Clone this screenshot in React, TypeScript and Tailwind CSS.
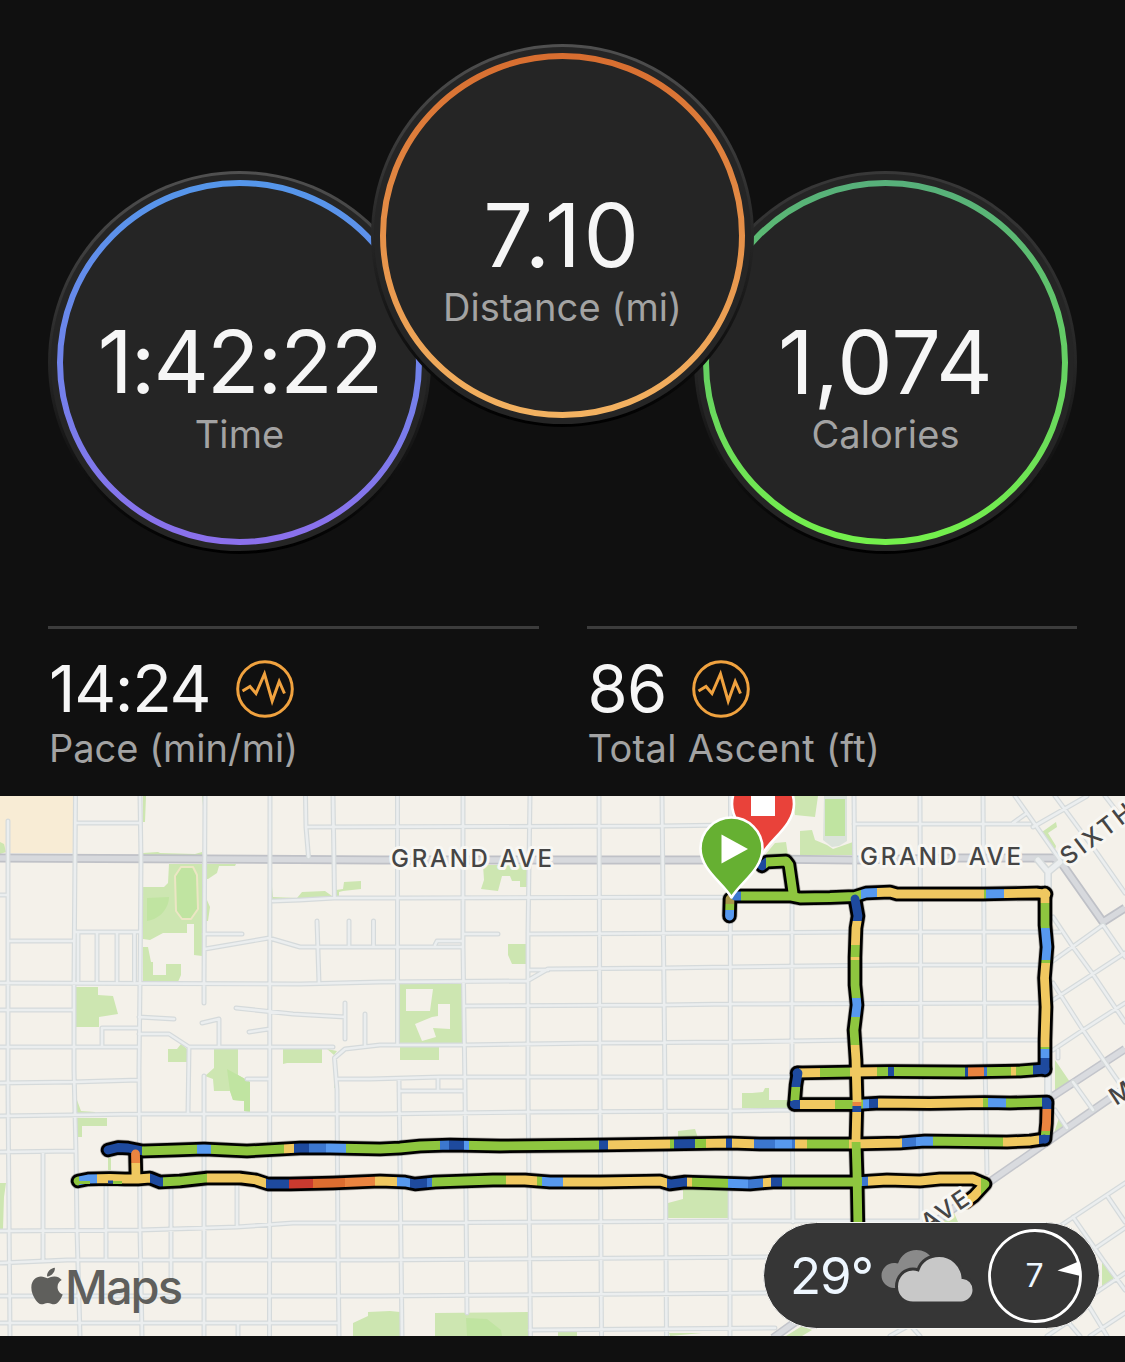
/**
 * Activity Summary
 *
 * Headline gauges (time, distance, calories), secondary stats
 * and the route map with current weather.
 */

import type { ReactNode } from 'react';
import { FaApple } from 'react-icons/fa';

export default function App() {
  return (
    <main className="w-[1125px] h-[1362px] overflow-hidden bg-[#101010] font-['Inter',sans-serif]">
      <section className="flex items-start px-12 pt-11 h-[626px]">
        <div className="shrink-0 mt-[127px]">
          <Gauge id="time" from="#5596ea" to="#8b70ec" edge="#505050" value="1:42:22" label="Time" valueClass="text-[86px] tracking-[-2px]" />
        </div>
        <div className="shrink-0 -mx-[60px] relative z-10">
          <Gauge id="distance" from="#d86e30" to="#f3b261" edge="#505050" value="7.10" label="Distance (mi)" valueClass="text-[88px] tracking-[2.6px]" />
        </div>
        <div className="shrink-0 mt-[127px]">
          <Gauge id="calories" from="#57b07a" to="#74f04c" edge="#383838" value="1,074" label="Calories" valueClass="text-[88px] tracking-[0.2px]" />
        </div>
      </section>

      <section className="grid grid-cols-2 gap-12 px-12 h-[170px]">
        <Stat value="14:24" label="Pace (min/mi)" valueClass="tracking-[-1.3px]" labelClass="tracking-[0px]" />
        <Stat value="86" label="Total Ascent (ft)" valueClass="tracking-[-0.8px]" labelClass="tracking-[0.35px]" />
      </section>

      <section className="relative h-[540px] overflow-hidden bg-[#f4f1ea]">
        <RouteMap />
        <div className="absolute left-[31px] top-[469px] flex items-start text-[#5f5f5c]">
          <FaApple className="w-[32px] h-[42px]" preserveAspectRatio="none" />
          <span className="ml-[2px] -mt-[2px] text-[47px] leading-[48px] font-medium tracking-[-2px]">Maps</span>
        </div>
        <Weather />
      </section>
    </main>
  );
}

interface GaugeProps {
  id: string;
  from: string;
  to: string;
  edge: string;
  value: string;
  label: string;
  valueClass: string;
}

function Gauge({ id, from, to, edge, value, label, valueClass }: GaugeProps) {
  return (
    <div className="relative w-[383px] h-[383px]">
      <svg className="absolute inset-0 w-full h-full" viewBox="0 0 383 383">
        <defs>
          <linearGradient id={`${id}-ring`} x1="0" y1="0" x2="0" y2="1">
            <stop offset="0" stopColor={from} />
            <stop offset="1" stopColor={to} />
          </linearGradient>
          <linearGradient id={`${id}-edge`} x1="0" y1="0" x2="0" y2="1">
            <stop offset="0" stopColor={edge} />
            <stop offset="0.5" stopColor="#262626" />
            <stop offset="0.75" stopColor="#131313" />
            <stop offset="1" stopColor="#000" />
          </linearGradient>
        </defs>
        <circle cx="191.5" cy="191.5" r="191.5" fill={`url(#${id}-edge)`} />
        <circle cx="191.5" cy="191.5" r="188.5" fill="#252525" />
        <circle cx="191.5" cy="191.5" r="179.5" fill="none" stroke={`url(#${id}-ring)`} strokeWidth="6" />
      </svg>
      <div className="relative flex flex-col items-center pt-[148px]">
        <span className={`leading-[86px] text-[#f6f6f6] ${valueClass}`}>{value}</span>
        <span className="mt-[6px] text-[38px] leading-[46px] tracking-[0.1px] text-[#a3a3a3]">{label}</span>
      </div>
    </div>
  );
}

interface StatProps {
  value: string;
  label: string;
  valueClass: string;
  labelClass: string;
}

function Stat({ value, label, valueClass, labelClass }: StatProps) {
  return (
    <div className="border-t-[3px] border-[#3c3c3c] pt-[31px] pl-px">
      <div className="flex items-center h-[58px]">
        <span className={`text-[65px] leading-[58px] text-[#f6f6f6] ${valueClass}`}>{value}</span>
        <svg className="ml-[26px] w-[58px] h-[58px]" viewBox="0 0 58 58" fill="none" stroke="#f0a23f" strokeWidth="3">
          <circle cx="29" cy="29" r="27.3" />
          <path d="M6.5 31l7.5-4.5 6 7 8.5-19.5 7.7 27 7-19.5 5.3 12" />
        </svg>
      </div>
      <p className={`mt-[7px] text-[38px] leading-[46px] text-[#a3a3a3] ${labelClass}`}>{label}</p>
    </div>
  );
}

function Weather() {
  return (
    <div className="absolute left-[763px] top-[426px] w-[337px] h-[107px] rounded-full border border-[#f8f8f6] bg-[#363636] flex items-center">
      <span className="pl-[26px] pt-[2px] w-[115px] text-[51px] tracking-[-1px] text-[#eef7ff]">29°</span>
      <svg className="shrink-0 w-[96px] h-[56px]" viewBox="0 0 96 56">
        <path fill="#8a8a8a" d="M15 40a12.500 12.500 0 0 1 0-25c2 0 3 .2 4 .6C22 7 29 2 37.500 2 44 2 49 5 52 9L46 40z" />
        <path
          fill="#c8c8c8"
          stroke="#363636"
          strokeWidth="3"
          d="M34 55C25 55 17.500 48.500 17.500 38.500S25 21 34 21c2 0 3.500.2 5 .8C42 13 50 7.500 60 7.500 72.500 7.500 83 17 84 29.500c6 .5 11 5.500 11 12.500S89 55 82 55z"
        />
      </svg>
      <svg className="ml-[12px] shrink-0 w-[96px] h-[96px]" viewBox="0 0 96 96">
        <circle cx="48" cy="48" r="45.500" fill="none" stroke="#fff" strokeWidth="2.800" />
        <path fill="#fff" d="M70.500 42.500L91.500 33.500 93.500 48z" />
        <text x="47.500" y="59" textAnchor="middle" fontSize="32" fill="#eef7ff">7</text>
      </svg>
    </div>
  );
}

const PARKS = [
  'M0 842l4 2 2 8-6 2z',
  'M143 796h3l-1 26h-2z',
  'M202 796h2v10h-1z',
  'M143 853l15-1 2 1 35 1 7-2v3h-59z',
  'M169 864h33v92l-8-1v-31h-7v9h-24l-13 7-7-1v-52h21l4-4z',
  'M143 947h5l3 15h2v13h13v-11h15v11l-3 7h-35z',
  'M207 864h29l-1 2h-16l-2 7-9 6h-1z',
  'M207 900l3 7-2 14h-2z',
  'M272 887l1 10 24 1 5-6 23-1 7 5v2l-60 3z',
  'M336 890l7-1 1-7 17-1v8l-18 2-4 1v5h-3z',
  'M76 987h22v8l15 1 5 18-19 3v10H76z',
  'M168 1049h9l4-5 6 5v13h-19z',
  'M214 1049h24v26l12 7v30l-6-1v-10l-11-1-3-9h-16l-1-12-8-3 9-8z',
  'M283 1049h39v14h-35l-4 1z',
  'M327 1049l10 2-3 4z',
  'M334 1075h1v13h-1z',
  'M77 1100l4 11 14 1v2H77z',
  'M77 1118h30v8H82v11h-5z',
  'M108 1158h3v12h-3z',
  'M0 1183h6l-2 14-1 32H0z',
  'M353 1323l15-7v-4l22-1 10 1v24h-47z',
  'M435 1313l93-1v24h-93z',
  'M558 1332h19v4h-19z',
  'M669 1333h33l-32 3z',
  'M668 1203l15-4v-12h45v31h-60z',
  'M678 1131l17-2 3 9h-20z',
  'M742 1093h10l11-1 2-4h4v12h20v8h-47z',
  'M483 865h44v22h-7v-6h-8l-2-5h-8l-4 15-17-2 3-9z',
  'M508 944h18v20h-14l-4-9z',
  'M399 984h64v59h-64z',
  'M400 1047h39v13h-39z',
  'M793 796h25l-3 21-20-2z',
  'M765 855l10-12 11-1 2 13z',
  'M800 831l12-1 3 10 12 5 6 4 20-7v13h-53z',
  'M1042 832l14-10 1 5-9 6 8 13-1 4z',
  'M1055 1060l15 22-15 10z',
  'M1060 1115l4 10-10 8z',
  'M1102 1257l13 20-13 11z',
  'M786 1336l16-10 10 4-10 6z',
  'M926 1222l26-14 6 14z',
];

const PARK_SHADES = [
  'M147 898l22-1c0 10-8 22-22 24z',
  'M227 1069l20 11 3 2v30l-6-1v-10l-11-1-3-9z',
  'M466 1318l21 1 14 11 1 6h-35z',
  'M825 799h20v37h-20z',
];

// Buildings cut out of the school grounds
const LOTS = [
  'M406 989h27l-3 22h-24z',
  'M438 1004h12v25l-17-1 3 9-14 4-7-17 17-7 6-1z',
];

const STREETS = [
  // north-south
  'M8 821V1090L10 1336',
  'M75.500 796L74 983V1070L76 1153 77 1230 80 1336',
  'M140 796L141 860 140 983 139 1070 140 1230 142 1336',
  'M205 796L204 983V1003',
  'M204 1076V1336',
  'M270 796L269.500 1336',
  'M305.500 796L306 827 308.500 857',
  'M333 796L334.500 898',
  'M380 1045L345 1049 334.500 1058 337 1090 338 1250 339 1336',
  'M317 921L319 983',
  'M349 921V946',
  'M373.500 921V946',
  'M397.500 796V1045',
  'M399 1080L402 1336',
  'M463 796V947L465 1090 467 1313',
  'M530 796L528 933V1090L530.500 1336',
  'M599 796L600 1090 601.500 1336',
  'M662 796L665 1090 666.500 1336',
  'M730.500 796L730 1336',
  'M792 897V1080L793 1222',
  'M854 796L855 897',
  'M920 796L921 1060V1222',
  'M983 796L985 1060 987 1173',
  'M78 932V981',
  'M97 932V981',
  'M117 932V981',
  'M134.500 932V981',
  'M345 1003V1039',
  'M365 1014V1046',
  'M189 1047L188 1113',
  'M438 1078V1090',
  'M43 1152V1261',
  'M106 1187V1260',
  'M171 1187V1277',
  'M237 1183V1227',
  'M238 1323V1336',
  // east-west
  'M77 823H140',
  'M307 827L660 826 730 825',
  'M854 824H1030',
  'M273 901L300 900 334 898 398 898 730 897',
  'M0 895H8',
  'M76 932H139',
  'M10 941H73',
  'M204 934H242',
  'M205 949L269 938 300 947H463',
  'M464 934H498',
  'M435 945L437 941H462',
  'M528 934L730 933 853 932H1060',
  'M0 983L300 984 380 982 527 981 548 969 663 968 730 967 890 965H1038',
  'M528 970H548',
  'M0 1010H73',
  'M139 1017L174 1019',
  'M202 1023L219 1019V1047',
  'M236 1008L293 1014 345 1017',
  'M249 1032L269 1029',
  'M102 1046V1028H139',
  'M139 1034H169L189 1047H333',
  'M380 1045L463 1045 600 1043 730 1042 853 1040H1038',
  'M0 1047H139',
  'M465 1006L663 1005 730 1004 1038 1003',
  'M0 1083L73 1082 139 1080',
  'M247 1079H269',
  'M337 1079H370L440 1077H796',
  'M399 1091H465',
  'M0 1116L140 1114H380L537 1112 730 1111 793 1110',
  'M0 1152L75 1151',
  'M0 1231L140 1230 237 1227 293 1223H380L750 1221H920',
  'M0 1263L67 1260H380L770 1257',
  'M0 1296H380L770 1293',
  'M0 1323H338',
  'M530 1330L775 1328',
  // diagonal grid, east side
  'M1015 796L1027 813 1060 860',
  'M1013 823L1027 813',
  'M1033 827L1087 796',
  'M1055 796L1097 853 1125 893',
  'M1105 796L1125 822',
  'M1053 917L1073 947 1092 973 1125 1022',
  'M1050 963L1103 925 1125 957',
  'M1053 1000L1125 953',
  'M1053 983L1083 1030 1107 1065 1125 1091',
  'M1053 1050L1083 1030 1125 1003',
  'M1058 1050V1058',
  'M1073 1082L1093 1110',
  'M1055 1110L1067 1128',
  'M1125 1183L1060 1226',
  'M1108 1197L1125 1222',
  'M1073 1217L1103 1260 1125 1290',
  'M1097 1247L1125 1228',
  'M1085 1300L1125 1273',
  'M1087 1303L1107 1336',
  'M1047 1336L1068 1322 1080 1336',
  'M1090 1336L1125 1313',
  'M890 1336L910 1325 920 1336',
];

const GRAND_AVE = 'M0 858L380 860 703 860 763 859 853 860 960 858 1053 858 1060 861 1103 922 1125 908';
const DIAGONAL_AVES = 'M1050 1098L1125 1049M773 1338L930 1226 988 1183 1060 1133 1125 1088';

const G = '#8ec63f';
const Y = '#f0c860';
const O = '#ea8440';
const R = '#ca3a2f';
const D = '#1e4a9e';
const B = '#3c77cf';
const L = '#5799ef';

// A stretch of the route; stops are [end coordinate along the axis, pace colour]
interface Leg {
  d: string;
  axis: 'x' | 'y';
  start: number;
  stops: [number, string][];
}

const LEGS: Leg[] = [
  { d: 'M762 866L767 862 786 861 789 865 793 893', axis: 'x', start: 755, stops: [[766, D], [800, G]] },
  { d: 'M729.500 916L730 899', axis: 'y', start: 890, stops: [[904, '#a8974a'], [910, G], [924, L]] },
  {
    d: 'M735 896L790 896 800 898 830 897.500 855 896.500 866 893 890 892 897 894 983 894 1037 893 1046 894',
    axis: 'x',
    start: 730,
    stops: [[741, B], [861, G], [877, L], [984, Y], [986, G], [1004, L], [1055, Y]],
  },
  {
    d: 'M1045 893L1045 925 1047 947 1044.500 978 1046 1007 1045 1040 1045 1070',
    axis: 'y',
    start: 888,
    stops: [[903, Y], [928, G], [960, L], [963, G], [1047, Y], [1049, G], [1058, L], [1080, D]],
  },
  {
    d: 'M797 1073L853 1072 890 1071.500 965 1072 1020 1071 1045 1069',
    axis: 'x',
    start: 790,
    stops: [[799, D], [820, Y], [850, G], [877, Y], [888, G], [894, D], [965, G], [968, D], [984, O], [987, B], [1011, G], [1016, Y], [1033, G], [1052, D]],
  },
  { d: 'M798 1073L796 1085 794.500 1104', axis: 'y', start: 1065, stops: [[1087, D], [1101, G], [1112, D]] },
  {
    d: 'M794.500 1104.500L855 1104.500 880 1103 930 1103.500 985 1102.500 1010 1103 1047 1102',
    axis: 'x',
    start: 788,
    stops: [[800, D], [835, Y], [855, G], [859, O], [863, G], [869, L], [878, D], [983, Y], [988, G], [1006, L], [1042, G], [1055, D]],
  },
  { d: 'M1047 1103L1046.500 1123 1045 1139', axis: 'y', start: 1095, stops: [[1109, D], [1131, O], [1135, G], [1150, D]] },
  {
    d: 'M108 1150L118 1147.500 128 1148 143 1151 175 1150 204 1149 247 1151 300 1148 330 1148 380 1149 400 1148 420 1146 450 1145 500 1146 600 1145 670 1144 730 1143 760 1144 853 1144 900 1143 925 1141 1007 1142 1030 1141 1044 1139',
    axis: 'x',
    start: 100,
    stops: [
      [142, D], [197, G], [211, L], [284, G], [294, Y], [309, D], [326, B], [346, L], [440, G], [449, B], [464, D], [469, L],
      [599, G], [608, D], [670, Y], [674, G], [695, D], [706, G], [726, Y], [732, D], [754, Y], [775, B], [792, L], [795, B],
      [807, Y], [849, G], [902, Y], [916, B], [933, L], [1003, G], [1039, Y], [1055, D],
    ],
  },
  { d: 'M135.500 1154L136 1178', axis: 'y', start: 1150, stops: [[1163, O], [1185, Y]] },
  {
    d: 'M78 1181L88 1179 110 1178.500 125 1179 138 1179 150 1178 160 1182 180 1181 207 1178 240 1178 256 1180 268 1184 290 1184 333 1183 380 1181 405 1182 415 1184 435 1182 493 1180 525 1180 550 1182 600 1182 660 1181 670 1184 685 1182 750 1184 773 1182 855 1182 887 1180 920 1181 940 1179 973 1179 985 1184 974 1196 966 1202',
    axis: 'x',
    start: 70,
    stops: [
      [79, G], [97, L], [150, Y], [163, D], [207, G], [266, Y], [289, D], [313, R], [345, '#dd6d30'], [375, O], [397, Y],
      [410, L], [427, D], [432, B], [506, G], [537, Y], [542, G], [563, L], [667, Y], [687, D], [692, Y], [728, G], [748, L],
      [763, B], [771, Y], [782, D], [862, G], [868, B], [981, Y], [990, G],
    ],
  },
  {
    d: 'M855 899L858 916 856 928 855 957 855 985 857 1005 854 1030 856 1060 857 1100 856 1140 857 1173 858 1228',
    axis: 'y',
    start: 893,
    stops: [[921, D], [945, Y], [957, G], [960, Y], [998, G], [1017, L], [1045, G], [1102, Y], [1106, O], [1112, D], [1142, Y], [1230, G]],
  },
];

function RouteMap() {
  return (
    <svg className="block w-full h-full" viewBox="0 796 1125 540" fill="none" strokeLinejoin="round">
      <path d="M0 796h74v57H0z" fill="#f8ecd5" />
      <path d={PARKS.join('')} fill="#cde6b1" />
      <path d="M824 796h23v45l-8 5-7 1-9-7z" fill="#dbe3da" />
      <path d={PARK_SHADES.join('')} fill="#c0e4a1" />
      <path d={LOTS.join('')} fill="#f4f1ea" />
      <path d="M181 867h12l4 8 1 34-7 10h-9l-6-8-1-35z" fill="#c0e4a1" stroke="#ece6c4" strokeWidth="2" />

      <path d={DIAGONAL_AVES} stroke="#c3c5cb" strokeWidth="8.500" />
      <path d={DIAGONAL_AVES} stroke="#d9dbdf" strokeWidth="5.500" />
      <path d={GRAND_AVE} stroke="#bfc1c7" strokeWidth="9" />
      <path d={GRAND_AVE} stroke="#d7d9dd" strokeWidth="5.500" />
      <g strokeLinecap="round">
        <path d={STREETS.join('')} stroke="#d5dadb" strokeWidth="5" />
        <path d="M1038 860L1048 872 1060 862M1048 872V1100" stroke="#d5dadb" strokeWidth="8" />
        <path d={STREETS.join('')} stroke="#ebeeef" strokeWidth="2.600" />
        <path d="M1038 860L1048 872 1060 862M1048 872V1100" stroke="#ebeeef" strokeWidth="5" />
      </g>

      <g stroke="#000" strokeLinecap="round">
        {LEGS.map((leg) => <path key={leg.d} d={leg.d} strokeWidth="16" strokeOpacity="0.25" />)}
        {LEGS.map((leg) => <path key={leg.d + 'o'} d={leg.d} strokeWidth="14.400" />)}
      </g>
      {LEGS.map((leg, i) => <PaceLine key={leg.d} id={`leg-${i}`} leg={leg} />)}
      <path d="M78 1182.500H90M113 1182.500H122" stroke={G} strokeWidth="3" />
      <path d="M108 1182H113" stroke={D} strokeWidth="3" />

      <MapLabel x={391} y={866.500} width={161}>GRAND AVE</MapLabel>
      <MapLabel x={860} y={865} width={161}>GRAND AVE</MapLabel>
      <MapLabel x={1068} y={866} width={84} rotate={-37}>SIXTH</MapLabel>
      <MapLabel x={1116} y={1106} width={22} rotate={-33}>M</MapLabel>
      <MapLabel x={928} y={1232} width={52} rotate={-34}>AVE</MapLabel>

      <Pin x={763} y={853} fill="#e9423a">
        <path d="M751 792h24v24h-24z" fill="#fff" />
      </Pin>
      <Pin x={731.500} y={897.500} fill="#66b032">
        <path d="M721.500 834.500V863.500L748 849z" fill="#fff" />
      </Pin>
    </svg>
  );
}

function PaceLine({ id, leg }: { id: string; leg: Leg }) {
  const end = leg.stops[leg.stops.length - 1][0];
  const at = (v: number) => (v - leg.start) / (end - leg.start);
  const vertical = leg.axis === 'y';

  return (
    <>
      <linearGradient
        id={id}
        gradientUnits="userSpaceOnUse"
        x1={vertical ? 0 : leg.start}
        x2={vertical ? 0 : end}
        y1={vertical ? leg.start : 0}
        y2={vertical ? end : 0}
      >
        {leg.stops.flatMap(([to, color], i) => {
          const from = i === 0 ? leg.start : leg.stops[i - 1][0];
          return [
            <stop key={`${i}a`} offset={at(from)} stopColor={color} />,
            <stop key={`${i}b`} offset={at(to)} stopColor={color} />,
          ];
        })}
      </linearGradient>
      <path d={leg.d} stroke={`url(#${id})`} strokeWidth="8.800" strokeLinecap="round" />
    </>
  );
}

interface MapLabelProps {
  x: number;
  y: number;
  width: number;
  rotate?: number;
  children: string;
}

function MapLabel({ x, y, width, rotate = 0, children }: MapLabelProps) {
  return (
    <text
      transform={`translate(${x} ${y}) rotate(${rotate})`}
      textLength={width}
      fontSize="24"
      fill="#454545"
      stroke="#f8f7f3"
      strokeWidth="6"
      paintOrder="stroke"
      className="font-[450]"
    >
      {children}
    </text>
  );
}

function Pin({ x, y, fill, children }: { x: number; y: number; fill: string; children: ReactNode }) {
  return (
    <>
      <path
        transform={`translate(${x} ${y})`}
        d="M0 0C-9 -15 -31 -28 -31 -49A31 31 0 0 1 31 -49C31 -28 9 -15 0 0z"
        fill={fill}
        stroke="#fff"
        strokeWidth="2.600"
      />
      {children}
    </>
  );
}
